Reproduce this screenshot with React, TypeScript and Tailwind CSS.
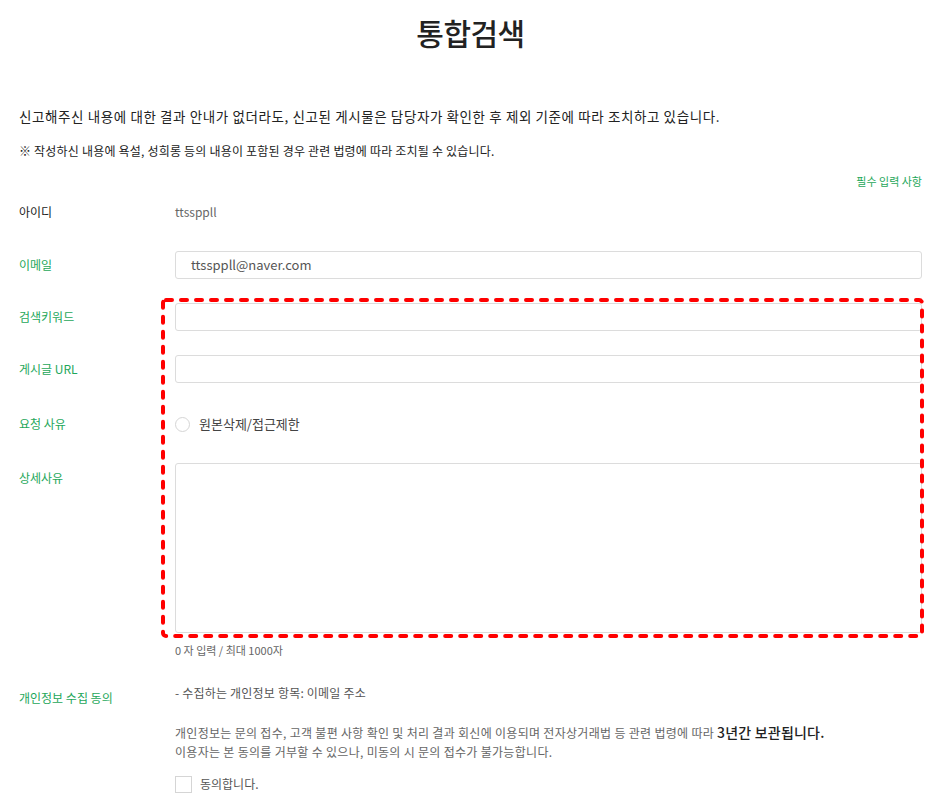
import React, { useState } from "react";

const font = { fontFamily: '"Noto Sans CJK KR", "Noto Sans", sans-serif' };

const Label: React.FC<{ children: React.ReactNode; dark?: boolean; className?: string }> = ({
  children,
  dark,
  className = "",
}) => (
  <div className={`text-[12px] ${dark ? "text-[#222]" : "text-[#1ea75a]"} ${className}`}>{children}</div>
);

const TextInput: React.FC<{ value?: string }> = ({ value = "" }) => (
  <div className="h-[28px] rounded-[3px] border border-[#dcdcdc] bg-white px-[15px] flex items-center text-[13px] text-[#555]">
    {value}
  </div>
);

const App: React.FC = () => {
  const [agree, setAgree] = useState(false);
  const [checked, setChecked] = useState(false);

  return (
    <div style={font} className="relative min-h-screen bg-white pl-[19px] pr-[10px]">
      <h1 className="h-[64px] flex items-center justify-center text-[30px] font-medium text-[#222] tracking-[-0.5px]">
        통합검색
      </h1>

      <p className="mt-[42px] text-[13.5px] leading-[20px] tracking-[0.6px] text-[#222]">
        신고해주신 내용에 대한 결과 안내가 없더라도, 신고된 게시물은 담당자가 확인한 후 제외 기준에 따라 조치하고 있습니다.
      </p>
      <p className="mt-[15px] text-[12px] leading-[20px] tracking-[0.2px] text-[#222]">
        ※ 작성하신 내용에 욕설, 성희롱 등의 내용이 포함된 경우 관련 법령에 따라 조치될 수 있습니다.
      </p>

      <div className="mt-[12px] text-right text-[11px] leading-[16px] text-[#1ea75a]">필수 입력 사항</div>

      <div className="mt-[13px] grid grid-cols-[156px_1fr] h-[20px] items-center">
        <Label dark>아이디</Label>
        <div className="text-[12px] text-[#666]">ttssppll</div>
      </div>

      <div className="mt-[29px] grid grid-cols-[156px_1fr] items-center">
        <Label>이메일</Label>
        <TextInput value="ttssppll@naver.com" />
      </div>

      <div className="mt-[24px] grid grid-cols-[156px_1fr] items-center">
        <Label>검색키워드</Label>
        <TextInput />
      </div>

      <div className="mt-[24px] grid grid-cols-[156px_1fr] items-center">
        <Label>게시글 URL</Label>
        <TextInput />
      </div>

      <div className="mt-[27px] grid grid-cols-[156px_1fr] h-[28px] items-center">
        <Label>요청 사유</Label>
        <button onClick={() => setChecked(!checked)} className="flex items-center gap-[9px] text-left">
          <span className="w-[15px] h-[15px] rounded-full border border-[#d5d5d5] bg-white flex items-center justify-center">
            {checked && <span className="w-[7px] h-[7px] rounded-full bg-[#1ea75a]" />}
          </span>
          <span className="text-[13px] text-[#444]">원본삭제/접근제한</span>
        </button>
      </div>

      <div className="mt-[25px] grid grid-cols-[156px_1fr]">
        <Label className="pt-[6px]">상세사유</Label>
        <div className="h-[170px] rounded-[3px] border border-[#dcdcdc] bg-white" />
      </div>

      <div className="mt-[9px] grid grid-cols-[156px_1fr]">
        <div />
        <div className="text-[11px] leading-[16px] text-[#666]">0 자 입력 / 최대 1000자</div>
      </div>

      <div className="mt-[26px] grid grid-cols-[156px_1fr]">
        <Label className="pt-[5px] leading-[18px]">개인정보 수집 동의</Label>
        <div>
          <div className="text-[12px] leading-[18px] tracking-[0.2px] text-[#555]">- 수집하는 개인정보 항목: 이메일 주소</div>
          <p className="mt-[21px] text-[12px] leading-[19px] tracking-[0.3px] text-[#666]">
            개인정보는 문의 접수, 고객 불편 사항 확인 및 처리 결과 회신에 이용되며 전자상거래법 등 관련 법령에 따라{" "}
            <span className="text-[14px] font-medium text-[#222] tracking-[0.2px]">3년간 보관됩니다.</span>
            <br />
            이용자는 본 동의를 거부할 수 있으나, 미동의 시 문의 접수가 불가능합니다.
          </p>
          <button onClick={() => setAgree(!agree)} className="mt-[14px] flex items-center gap-[8px]">
            <span className="w-[17px] h-[17px] border border-[#d5d5d5] bg-white flex items-center justify-center text-[11px] text-[#1ea75a]">
              {agree ? "✓" : ""}
            </span>
            <span className="text-[12px] text-[#555]">동의합니다.</span>
          </button>
        </div>
      </div>

      {/* annotation overlay */}
      <svg
        className="absolute left-[161px] top-[298px] pointer-events-none"
        width="763"
        height="340"
        viewBox="0 0 763 340"
      >
        <rect
          x="2"
          y="2"
          width="759"
          height="336"
          rx="3"
          fill="none"
          stroke="#ff0000"
          strokeWidth="4"
          strokeDasharray="6 9"
          strokeLinecap="round"
        />
      </svg>
    </div>
  );
};

export default App;
